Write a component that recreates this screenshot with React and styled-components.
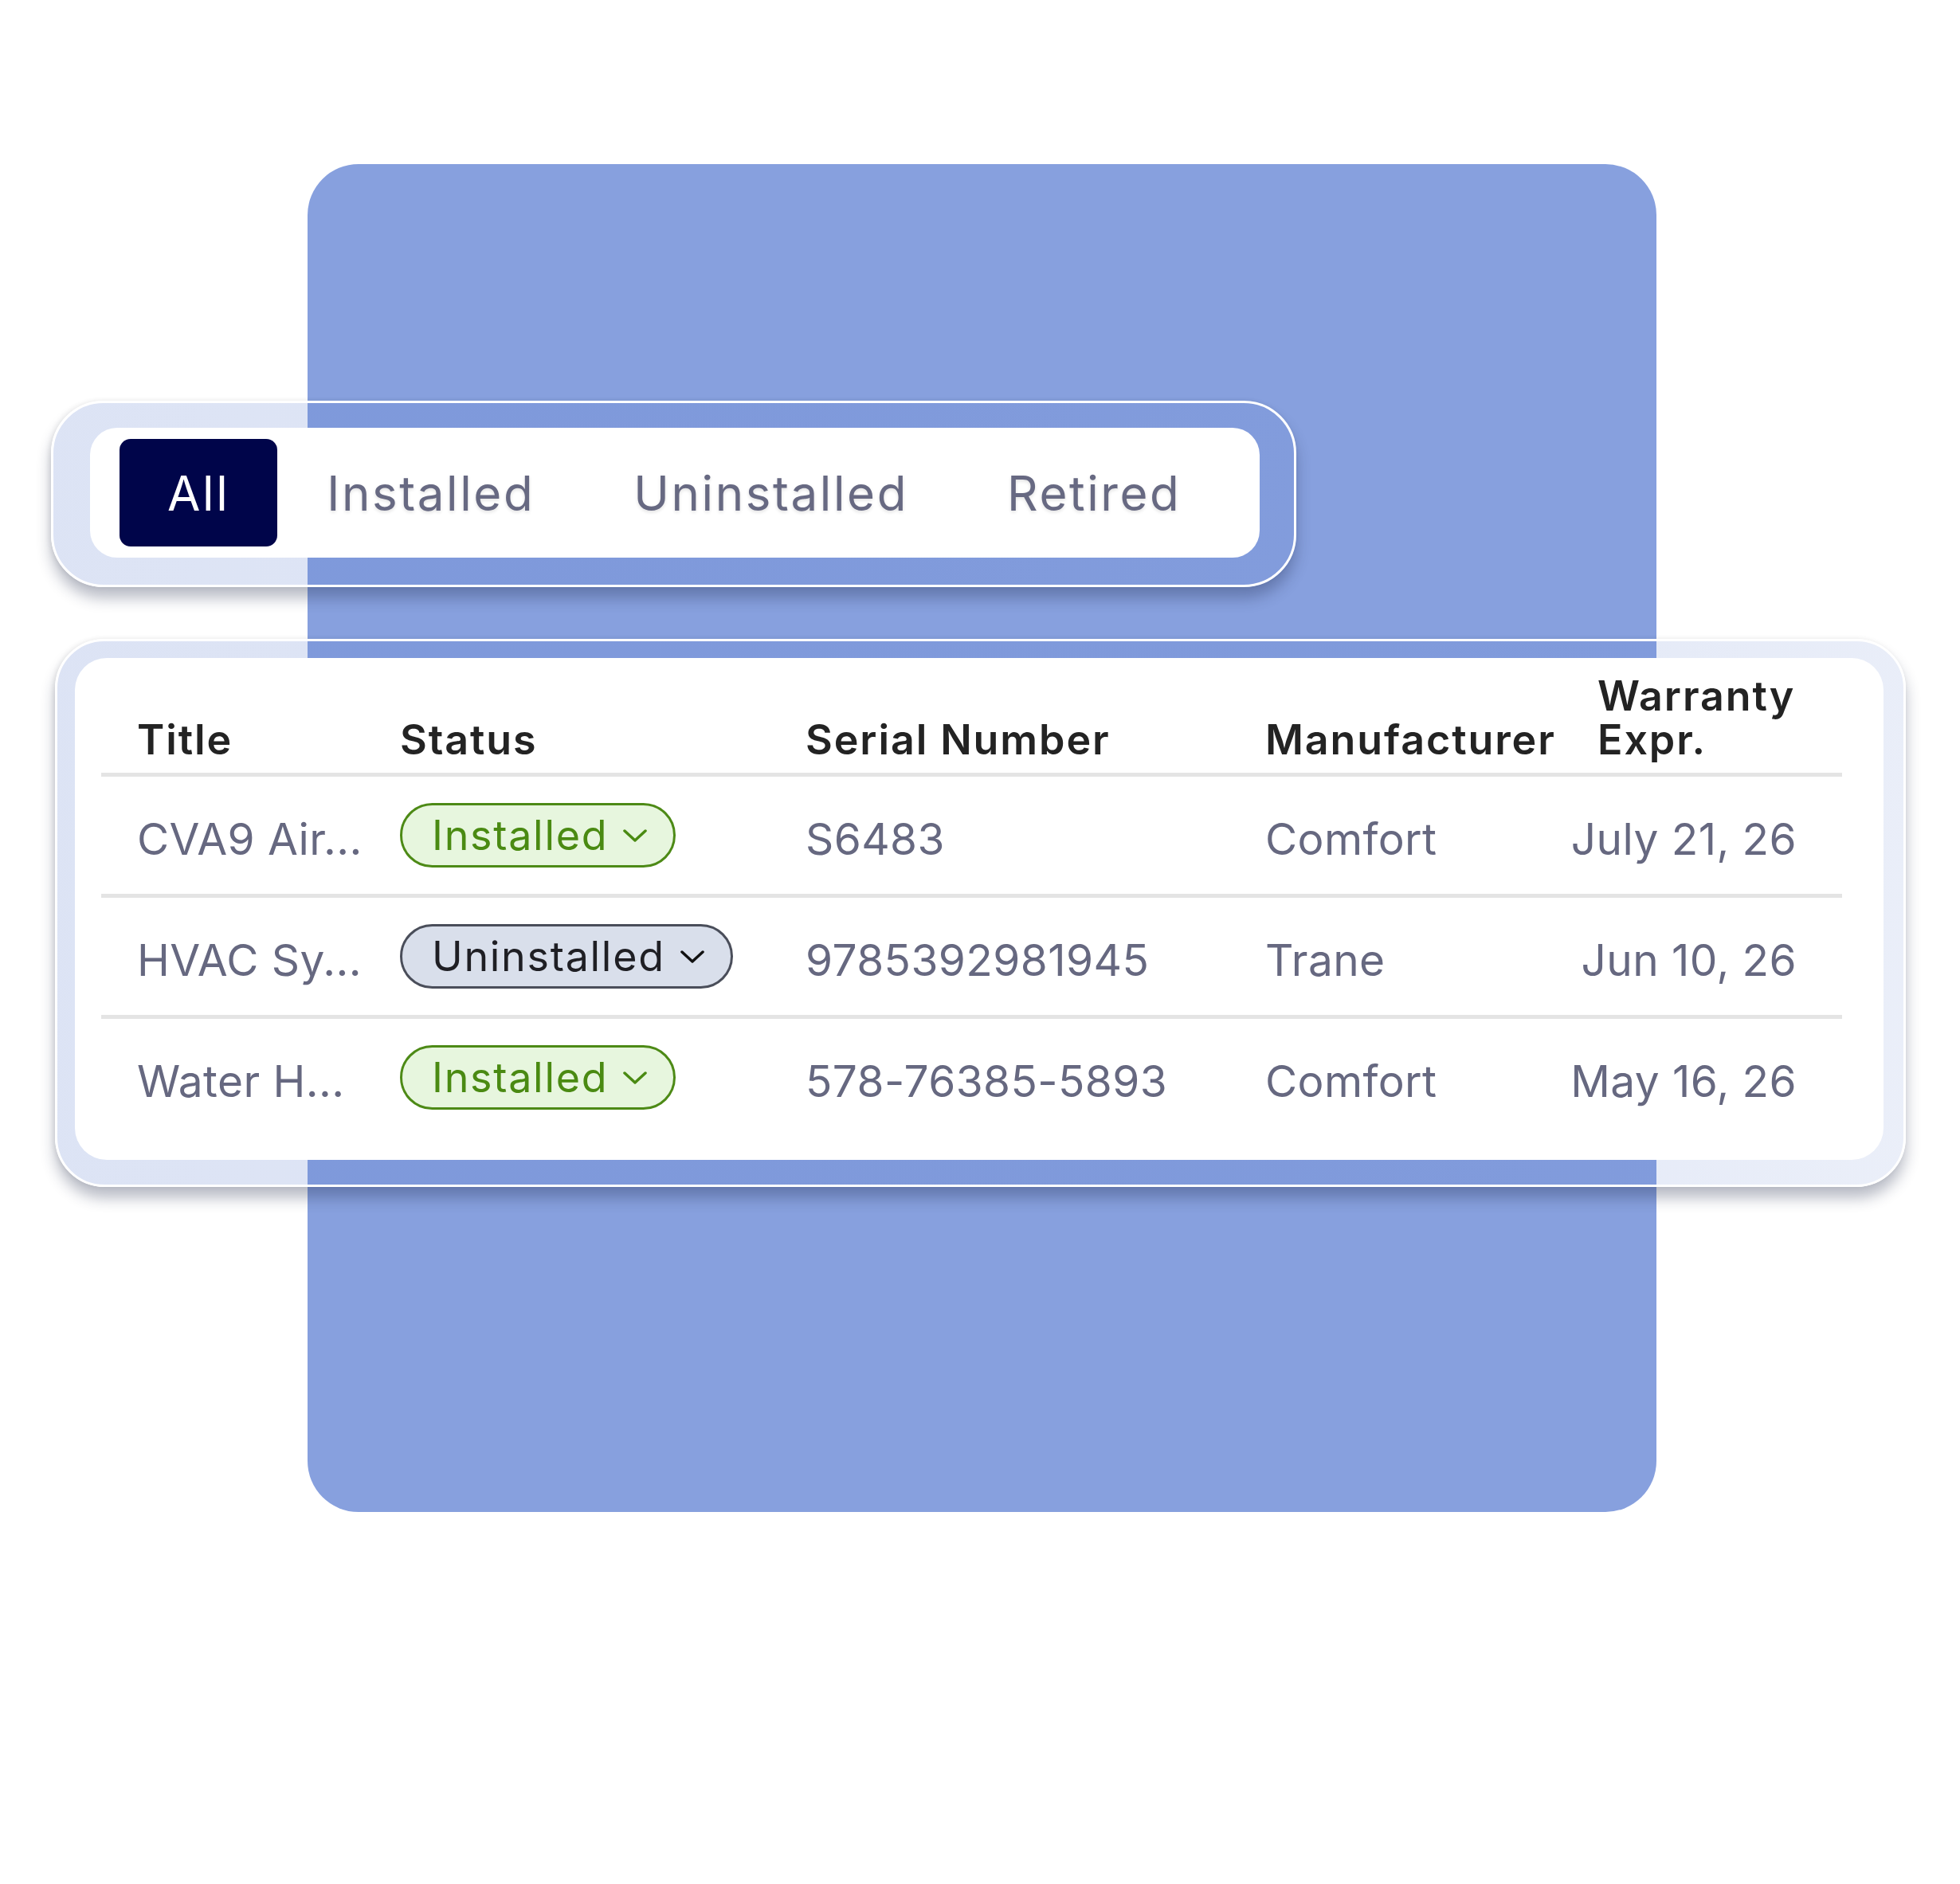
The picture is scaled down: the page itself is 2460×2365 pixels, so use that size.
import React from 'react';
import styled, { createGlobalStyle } from 'styled-components';

const GlobalStyle = createGlobalStyle`
  html, body {
    margin: 0;
    padding: 0;
    background: #ffffff;
  }
  body {
    font-family: Inter, "Noto Sans", sans-serif;
  }
`;

const tabs = ['All', 'Installed', 'Uninstalled', 'Retired'];

const assets = [
  { title: 'CVA9 Air...', status: 'installed', serial: 'S6483', maker: 'Comfort', expires: 'July 21, 26' },
  { title: 'HVAC Sy...', status: 'uninstalled', serial: '9785392981945', maker: 'Trane', expires: 'Jun 10, 26' },
  { title: 'Water H...', status: 'installed', serial: '578-76385-5893', maker: 'Comfort', expires: 'May 16, 26' },
];

const statusTones = {
  installed: { label: 'Installed', fill: '#e7f6de', line: '#4d8a16', text: '#4a8a12', icon: '#4a8a12' },
  uninstalled: { label: 'Uninstalled', fill: '#d9dfeb', line: '#4a4e5a', text: '#1f1f24', icon: '#111111' },
};

const Stage = styled.div`
  display: grid;
  width: 2460px;
  height: 2365px;
  overflow: hidden;
`;

const Backdrop = styled.div`
  grid-area: 1 / 1;
  align-self: start;
  justify-self: start;
  margin: 206px 0 0 386px;
  width: 1693px;
  height: 1692px;
  border-radius: 64px;
  background: #87a0de;
`;

const Stack = styled.div`
  grid-area: 1 / 1;
  align-self: start;
  justify-self: start;
  margin: 503px 0 0 64px;
  display: flex;
  flex-direction: column;
  gap: 65px;
`;

const Glass = styled.div`
  box-sizing: border-box;
  width: ${(p) => p.$width}px;
  margin-left: ${(p) => p.$offset || 0}px;
  padding: ${(p) => p.$pad};
  border: 3px solid #ffffff;
  border-radius: ${(p) => p.$radius}px;
  background: linear-gradient(
    100deg,
    rgba(97, 129, 208, 0.22) 0%,
    rgba(97, 129, 208, 0.2) 60%,
    rgba(97, 129, 208, 0.13) 100%
  );
  box-shadow: 0 14px 18px rgba(25, 35, 70, 0.3), -2px 0 6px rgba(0, 0, 0, 0.08);
`;

const TabBar = styled.div`
  display: flex;
  align-items: center;
  box-sizing: border-box;
  height: 163px;
  padding: 0 37px;
  background: #ffffff;
  border-radius: 34px;
`;

const Tab = styled.button`
  all: unset;
  box-sizing: border-box;
  display: flex;
  align-items: center;
  height: 135px;
  padding: 0 ${(p) => (p.$active ? 60 : 62)}px;
  border-radius: 14px;
  font-family: Inter, "Noto Sans", sans-serif;
  font-size: 60px;
  letter-spacing: 2.6px;
  color: ${(p) => (p.$active ? '#ffffff' : '#676982')};
  background: ${(p) => (p.$active ? '#00054a' : 'transparent')};
  text-shadow: ${(p) => (p.$active ? 'none' : '0 2px 4px rgba(0, 0, 0, 0.12)')};
`;

const TableCard = styled.div`
  background: #ffffff;
  border-radius: 40px;
  padding: 20px 52px 30px 33px;
`;

const Row = styled.div`
  display: grid;
  grid-template-columns: 330px 509px 577px 1fr 300px;
  align-items: ${(p) => (p.$head ? 'end' : 'center')};
  height: ${(p) => (p.$head ? 'auto' : '147px')};
  padding: ${(p) => (p.$head ? '0 57px 14px 45px' : '0 57px 0 45px')};
`;

const Divider = styled.div`
  height: 5px;
  background: #e4e4e4;
`;

const HeadCell = styled.div`
  font-size: 52px;
  font-weight: 600;
  line-height: 55px;
  letter-spacing: 1.9px;
  color: #232323;
  white-space: nowrap;
  justify-self: ${(p) => (p.$end ? 'end' : 'start')};
  width: ${(p) => (p.$end ? '250px' : 'auto')};
`;

const Cell = styled.div`
  padding-top: 10px;
  font-size: 55px;
  line-height: 1;
  letter-spacing: 0.4px;
  color: #666880;
  white-space: nowrap;
  justify-self: ${(p) => (p.$end ? 'end' : 'start')};
`;

const Badge = styled.span`
  display: inline-flex;
  align-items: center;
  gap: 19px;
  box-sizing: border-box;
  height: 81px;
  padding: 0 33px 0 37px;
  border: 3px solid ${(p) => p.$tone.line};
  border-radius: 41px;
  background: ${(p) => p.$tone.fill};
  color: ${(p) => p.$tone.text};
  font-size: 52px;
  line-height: 1;
  letter-spacing: 1.7px;
  white-space: nowrap;
`;

const Chevron = ({ color }) => (
  <svg width="30" height="16" viewBox="0 0 30 16" fill="none">
    <path d="M2 2 L15 14 L28 2" stroke={color} strokeWidth="3.5" strokeLinecap="round" strokeLinejoin="round" />
  </svg>
);

const StatusBadge = ({ status }) => {
  const tone = statusTones[status];
  return (
    <Badge $tone={tone}>
      {tone.label}
      <Chevron color={tone.icon} />
    </Badge>
  );
};

export default function App() {
  return (
    <>
      <GlobalStyle />
      <Stage>
        <Backdrop />
        <Stack>
          <Glass $width={1563} $radius={66} $pad="31px 43px 34px 46px">
            <TabBar>
              {tabs.map((t, i) => (
                <Tab key={t} $active={i === 0}>
                  {t}
                </Tab>
              ))}
            </TabBar>
          </Glass>

          <Glass $width={2323} $offset={5} $radius={62} $pad="21px 25px 31px 22px">
            <TableCard>
              <Row $head>
                <HeadCell>Title</HeadCell>
                <HeadCell>Status</HeadCell>
                <HeadCell>Serial Number</HeadCell>
                <HeadCell>Manufacturer</HeadCell>
                <HeadCell $end>
                  Warranty
                  <br />
                  Expr.
                </HeadCell>
              </Row>
              {assets.map((a) => (
                <React.Fragment key={a.serial}>
                  <Divider />
                  <Row>
                    <Cell>{a.title}</Cell>
                    <div>
                      <StatusBadge status={a.status} />
                    </div>
                    <Cell>{a.serial}</Cell>
                    <Cell>{a.maker}</Cell>
                    <Cell $end>{a.expires}</Cell>
                  </Row>
                </React.Fragment>
              ))}
            </TableCard>
          </Glass>
        </Stack>
      </Stage>
    </>
  );
}
